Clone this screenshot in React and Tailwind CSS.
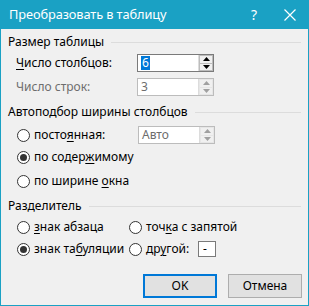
import React from "react";

const F = { fontFamily: '"Noto Sans", "Open Sans", sans-serif' };

function U({ children }) {
  return <span className="underline underline-offset-2 decoration-1">{children}</span>;
}

function Radio({ checked }) {
  return (
    <span className="flex h-[13px] w-[13px] shrink-0 items-center justify-center rounded-full border border-[#333333] bg-white">
      {checked && <span className="h-[7px] w-[7px] rounded-full bg-[#333333]" />}
    </span>
  );
}

function Group({ title }) {
  return (
    <div className="flex h-[16px] items-center pl-[7px] pr-[7px]">
      <span className="text-[12px] text-black">{title}</span>
      <div className="ml-[7px] h-px flex-1 bg-[#dcdcdc]" />
    </div>
  );
}

function Tri({ up, color }) {
  return (
    <svg width="7" height="4" viewBox="0 0 7 4">
      {up ? <path d="M3.5 0 L7 4 L0 4 Z" fill={color} /> : <path d="M0 0 L7 0 L3.5 4 Z" fill={color} />}
    </svg>
  );
}

function Spin({ value, active, disabled, selected }) {
  const border = active ? "border-[#7a7a7a]" : "border-[#bcbcbc]";
  const tri = disabled ? "#a0a0a0" : "#000000";
  return (
    <div className={`flex h-[18px] w-[77px] border ${border} bg-white`}>
      <div className="flex flex-1 items-center pl-[3px] text-[12px]">
        {selected ? (
          <span className="bg-[#0078d7] px-px leading-[14px] text-white">{value}</span>
        ) : (
          <span className={disabled ? "text-[#6d6d6d]" : "text-black"}>{value}</span>
        )}
      </div>
      <div className="flex w-[15px] flex-col border-l border-[#dcdcdc] bg-[#f0f0f0]">
        <div className={`flex flex-1 items-center justify-center border ${disabled ? "border-[#e6e6e6]" : "border-[#bcbcbc]"}`}>
          <Tri up color={tri} />
        </div>
        <div className={`flex flex-1 items-center justify-center border border-t-0 ${disabled ? "border-[#e6e6e6]" : "border-[#bcbcbc]"}`}>
          <Tri color={tri} />
        </div>
      </div>
    </div>
  );
}

export default function App() {
  return (
    <div style={F} className="flex h-[306px] w-[309px] flex-col border-x border-b border-[#1aa1c4] bg-[#f0f0f0] text-[12px] text-black">
      <div className="flex h-[29px] shrink-0 items-center bg-[#1aa1c4] pl-[8px] text-white">
        <span className="text-[12.8px] tracking-[-0.1px]">Преобразовать в таблицу</span>
        <span className="ml-auto mr-[27px] text-[14px]">?</span>
        <svg width="12" height="12" viewBox="0 0 12 12" className="mr-[12px]">
          <path d="M0.5 0.5 L11.5 11.5 M11.5 0.5 L0.5 11.5" stroke="white" strokeWidth="1.2" />
        </svg>
      </div>

      <div className="mt-[5px]">
        <Group title="Размер таблицы" />
      </div>
      <div className="mt-[4px] flex h-[18px] items-center pl-[15px]">
        <span className="w-[121px]"><U>Ч</U>исло столбцов:</span>
        <Spin value="6" active selected />
      </div>
      <div className="mt-[6px] flex h-[18px] items-center pl-[15px]">
        <span className="w-[121px] text-[#6d6d6d]">Число строк:</span>
        <Spin value="3" disabled />
      </div>

      <div className="mt-[8px]">
        <Group title="Автоподбор ширины столбцов" />
      </div>
      <div className="mt-[6px] flex h-[18px] items-center pl-[16px]">
        <Radio />
        <span className="ml-[4px] w-[104px]">посто<U>я</U>нная:</span>
        <Spin value="Авто" disabled />
      </div>
      <div className="mt-[4px] flex h-[18px] items-center pl-[16px]">
        <Radio checked />
        <span className="ml-[4px]">по содер<U>ж</U>имому</span>
      </div>
      <div className="mt-[6px] flex h-[18px] items-center pl-[16px]">
        <Radio />
        <span className="ml-[4px]">по ширине <U>о</U>кна</span>
      </div>

      <div className="mt-[8px]">
        <Group title="Разделитель" />
      </div>
      <div className="mt-[4px] flex h-[18px] items-center pl-[16px]">
        <Radio />
        <span className="ml-[4px] w-[95px]"><U>з</U>нак абзаца</span>
        <Radio />
        <span className="ml-[4px]">точ<U>к</U>а с запятой</span>
      </div>
      <div className="mt-[4px] flex h-[18px] items-center pl-[16px]">
        <Radio checked />
        <span className="ml-[4px] w-[95px]">знак та<U>б</U>уляции</span>
        <Radio />
        <span className="ml-[4px] w-[52px]">др<U>у</U>гой:</span>
        <div className="flex h-[16px] w-[18px] items-center border border-[#7a7a7a] bg-white pl-[4px]">-</div>
      </div>

      <div className="mt-[16px] flex gap-[11px] pl-[142px]">
        <button className="h-[24px] w-[74px] border-2 border-[#0078d7] bg-[#e1e1e1]">OK</button>
        <button className="h-[24px] w-[74px] border border-[#adadad] bg-[#e1e1e1]">Отмена</button>
      </div>
    </div>
  );
}
